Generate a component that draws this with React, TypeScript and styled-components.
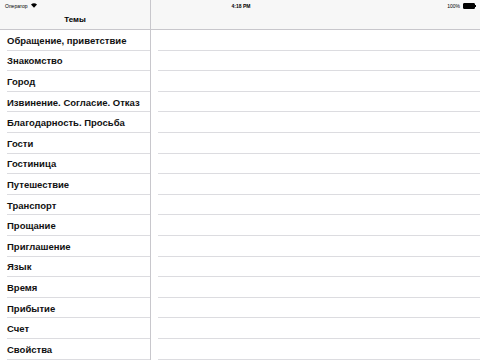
import React from "react";
import styled, { createGlobalStyle } from "styled-components";

const GS = createGlobalStyle`
  html, body {
    margin: 0;
    padding: 0;
    background: #fff;
    font-family: "Liberation Sans", Arial, sans-serif;
  }
`;

const Screen = styled.div`
  position: relative;
  width: 480px;
  height: 360px;
  overflow: hidden;
  display: flex;
  background: #fff;
`;

const StatusBar = styled.div`
  position: absolute;
  top: 0;
  left: 0;
  right: 0;
  height: 11px;
  display: flex;
  align-items: center;
  justify-content: space-between;
  padding: 0 3px 0 5px;
  font-size: 5px;
  color: #000;
  z-index: 2;
`;

const StatusSide = styled.div<{ end?: boolean }>`
  display: flex;
  align-items: center;
  gap: 3px;
  width: 80px;
  justify-content: ${(p) => (p.end ? "flex-end" : "flex-start")};
`;

const Clock = styled.div`
  font-weight: bold;
`;

const Battery = styled.div`
  width: 10px;
  height: 4px;
  border: 0.6px solid #000;
  background: #000;
  border-radius: 1px;
  margin-right: 2px;
  position: relative;
  &::after {
    content: "";
    position: absolute;
    right: -2px;
    top: 1px;
    width: 1px;
    height: 2px;
    background: #000;
  }
`;

const Pane = styled.div<{ w?: number }>`
  display: flex;
  flex-direction: column;
  width: ${(p) => (p.w ? `${p.w}px` : "auto")};
  flex: ${(p) => (p.w ? "none" : 1)};
  height: 100%;
`;

const Divider = styled.div`
  width: 1px;
  background: #c8c7cc;
  height: 100%;
  flex: none;
`;

const NavBar = styled.div`
  height: 30px;
  flex: none;
  background: #f7f7f7;
  border-bottom: 1px solid #c8c7cc;
  box-sizing: border-box;
  display: flex;
  align-items: flex-end;
  justify-content: center;
  padding-bottom: 5px;
  font-size: 8px;
  font-weight: bold;
  color: #000;
`;

const List = styled.div`
  display: flex;
  flex-direction: column;
`;

const Row = styled.div`
  height: 20.6px;
  flex: none;
  box-sizing: border-box;
  padding-left: 7px;
  display: flex;
  align-items: center;
  position: relative;
  font-size: 9.5px;
  font-weight: bold;
  color: #111;
  &::after {
    content: "";
    position: absolute;
    left: 7px;
    right: 0;
    bottom: 0;
    height: 1px;
    background: #dcdce0;
  }
`;

const topics = [
  "Обращение, приветствие",
  "Знакомство",
  "Город",
  "Извинение. Согласие. Отказ",
  "Благодарность. Просьба",
  "Гости",
  "Гостиница",
  "Путешествие",
  "Транспорт",
  "Прощание",
  "Приглашение",
  "Язык",
  "Время",
  "Прибытие",
  "Счет",
  "Свойства",
];

const Wifi = () => (
  <svg width="6" height="5" viewBox="0 0 12 9">
    <path d="M6 9 L0 2.5 A9 9 0 0 1 12 2.5 Z" fill="#000" />
  </svg>
);

export default function App() {
  return (
    <Screen>
      <GS />
      <StatusBar>
        <StatusSide>
          <span>Оператор</span>
          <Wifi />
        </StatusSide>
        <Clock>4:18 PM</Clock>
        <StatusSide end>
          <span>100%</span>
          <Battery />
        </StatusSide>
      </StatusBar>
      <Pane w={150}>
        <NavBar>Темы</NavBar>
        <List>
          {topics.map((t) => (
            <Row key={t}>{t}</Row>
          ))}
        </List>
      </Pane>
      <Divider />
      <Pane>
        <NavBar />
        <List>
          {topics.map((t) => (
            <Row key={t} />
          ))}
        </List>
      </Pane>
    </Screen>
  );
}
